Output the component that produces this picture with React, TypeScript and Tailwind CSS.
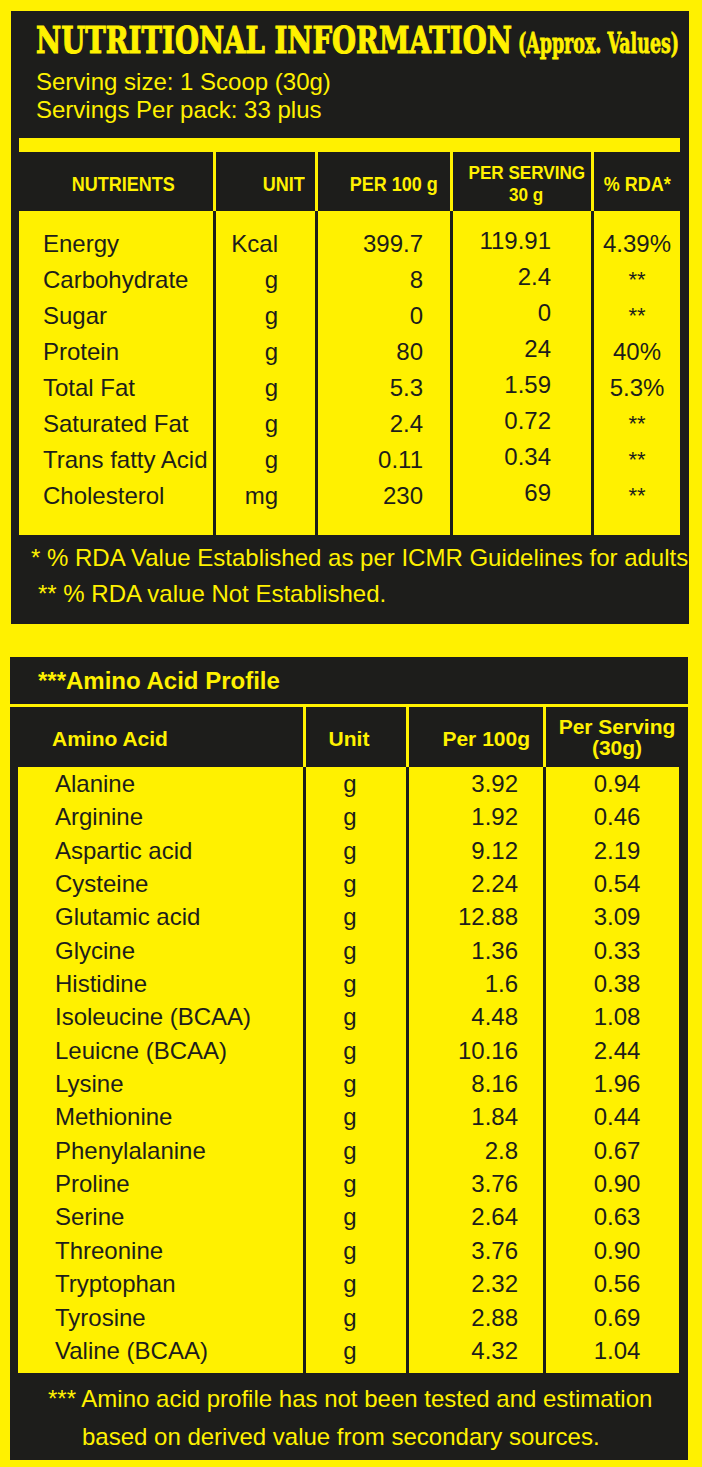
import React from "react";

const nutrients: [string, string, string, string, string][] = [
  ["Energy", "Kcal", "399.7", "119.91", "4.39%"],
  ["Carbohydrate", "g", "8", "2.4", "**"],
  ["Sugar", "g", "0", "0", "**"],
  ["Protein", "g", "80", "24", "40%"],
  ["Total Fat", "g", "5.3", "1.59", "5.3%"],
  ["Saturated Fat", "g", "2.4", "0.72", "**"],
  ["Trans fatty Acid", "g", "0.11", "0.34", "**"],
  ["Cholesterol", "mg", "230", "69", "**"],
];

const aminos: [string, string, string][] = [
  ["Alanine", "3.92", "0.94"],
  ["Arginine", "1.92", "0.46"],
  ["Aspartic acid", "9.12", "2.19"],
  ["Cysteine", "2.24", "0.54"],
  ["Glutamic acid", "12.88", "3.09"],
  ["Glycine", "1.36", "0.33"],
  ["Histidine", "1.6", "0.38"],
  ["Isoleucine (BCAA)", "4.48", "1.08"],
  ["Leuicne (BCAA)", "10.16", "2.44"],
  ["Lysine", "8.16", "1.96"],
  ["Methionine", "1.84", "0.44"],
  ["Phenylalanine", "2.8", "0.67"],
  ["Proline", "3.76", "0.90"],
  ["Serine", "2.64", "0.63"],
  ["Threonine", "3.76", "0.90"],
  ["Tryptophan", "2.32", "0.56"],
  ["Tyrosine", "2.88", "0.69"],
  ["Valine (BCAA)", "4.32", "1.04"],
];

function NutrientTable() {
  return (
    <div className="mt-[14px] ml-[8px] w-[661px]">
      <div className="h-[14px] bg-[#fff100]" />
      <div className="grid grid-cols-[194px_102px_135px_141px_89px] h-[59px] text-[#fff100] font-bold text-[20px] leading-[20px] whitespace-nowrap">
        <div className="flex items-center justify-center pl-[14px] pt-[4px]">
          <span className="inline-block scale-x-[0.9]">NUTRIENTS</span>
        </div>
        <div className="flex items-center justify-end pr-[10px] pt-[4px] border-l-[3px] border-[#fff100]">
          <span className="inline-block origin-right scale-x-[0.9]">UNIT</span>
        </div>
        <div className="flex items-center justify-end pr-[12px] pt-[4px] border-l-[3px] border-[#fff100]">
          <span className="inline-block origin-right scale-x-[0.9]">PER 100 g</span>
        </div>
        <div className="flex flex-col items-center justify-center pl-[9px] pt-[4px] text-[19px] leading-[22px] border-l-[3px] border-[#fff100]">
          <span className="inline-block scale-x-[0.9]">PER SERVING</span>
          <span className="inline-block scale-x-[0.9]">30 g</span>
        </div>
        <div className="flex items-center justify-center pt-[4px] border-l-[3px] border-[#fff100]">
          <span className="inline-block scale-x-[0.9]">% RDA*</span>
        </div>
      </div>
      <div className="grid grid-cols-[194px_102px_135px_141px_89px] h-[324px] bg-[#fff100] text-[#1d1d1b] text-[24px] leading-[36px] whitespace-nowrap">
        <div className="pt-[15px] pl-[24px]">
          {nutrients.map((r) => (
            <div key={r[0]} className="h-[36px]">{r[0]}</div>
          ))}
        </div>
        <div className="pt-[15px] pr-[37px] text-right border-l-[3px] border-[#1d1d1b]">
          {nutrients.map((r) => (
            <div key={r[0]} className="h-[36px]">{r[1]}</div>
          ))}
        </div>
        <div className="pt-[15px] pr-[27px] text-right border-l-[3px] border-[#1d1d1b]">
          {nutrients.map((r) => (
            <div key={r[0]} className="h-[36px]">{r[2]}</div>
          ))}
        </div>
        <div className="pt-[12px] pr-[40px] text-right border-l-[3px] border-[#1d1d1b]">
          {nutrients.map((r) => (
            <div key={r[0]} className="h-[36px]">{r[3]}</div>
          ))}
        </div>
        <div className="pt-[15px] text-center border-l-[3px] border-[#1d1d1b]">
          {nutrients.map((r) => (
            <div key={r[0]} className={r[4] === "**" ? "h-[36px] text-[22px]" : "h-[36px]"}>
              {r[4]}
            </div>
          ))}
        </div>
      </div>
    </div>
  );
}

function AminoTable() {
  return (
    <div className="h-[753px] bg-[#1d1d1b]">
      <div className="grid grid-cols-[293px_103px_137px_145px] h-[60px] text-[#fff100] font-bold text-[21px] leading-[21px]">
        <div className="flex items-center pl-[42px] pt-[2px]">Amino Acid</div>
        <div className="flex items-center justify-center pr-[14px] pt-[2px] border-l-[3px] border-[#fff100]">Unit</div>
        <div className="flex items-center justify-end pr-[13px] pt-[2px] border-l-[3px] border-[#fff100]">Per 100g</div>
        <div className="flex flex-col items-center justify-center border-l-[3px] border-[#fff100]">
          <span>Per Serving</span>
          <span>(30g)</span>
        </div>
      </div>
      <div className="ml-[8px] w-[661px] h-[606px] bg-[#fff100] grid grid-cols-[285px_103px_137px_136px] text-[#1d1d1b] text-[24px] leading-[33.35px] whitespace-nowrap">
        <div className="pl-[37px]">
          {aminos.map((r) => (
            <div key={r[0]} className="h-[33.35px]">{r[0]}</div>
          ))}
        </div>
        <div className="pr-[12px] text-center border-l-[3px] border-[#1d1d1b]">
          {aminos.map((r) => (
            <div key={r[0]} className="h-[33.35px]">g</div>
          ))}
        </div>
        <div className="pr-[25px] text-right border-l-[3px] border-[#1d1d1b]">
          {aminos.map((r) => (
            <div key={r[0]} className="h-[33.35px]">{r[1]}</div>
          ))}
        </div>
        <div className="pl-[9px] text-center border-l-[3px] border-[#1d1d1b]">
          {aminos.map((r) => (
            <div key={r[0]} className="h-[33.35px]">{r[2]}</div>
          ))}
        </div>
      </div>
      <div className="mt-[7px] text-[#fff100] text-[24px] leading-[38px] whitespace-nowrap">
        <div className="pl-[38px]">*** Amino acid profile has not been tested and estimation</div>
        <div className="pl-[72px]">based on derived value from secondary sources.</div>
      </div>
    </div>
  );
}

export default function App() {
  return (
    <div className="w-[702px] h-[1467px] bg-[#fff100] pt-[11px] overflow-hidden font-['Liberation_Sans',Arial,sans-serif]">
      <div className="ml-[11px] w-[678px] h-[613px] bg-[#1d1d1b]">
        <div className="pt-[10px] pl-[25px] flex items-baseline text-[#fff100] font-['DejaVu_Serif',serif] font-bold leading-none whitespace-nowrap [-webkit-text-stroke:1.2px_#fff100]">
          <div className="w-[482px] shrink-0">
            <span className="inline-block origin-left scale-x-[0.725] text-[38px]">NUTRITIONAL INFORMATION</span>
          </div>
          <div className="w-[161px] shrink-0">
            <span className="inline-block origin-left scale-x-[0.645] text-[27px] [-webkit-text-stroke:0.8px_#fff100]">(Approx. Values)</span>
          </div>
        </div>
        <div className="mt-[9px] pl-[25px] text-[#fff100] text-[24px] leading-[28px]">
          <div>Serving size: 1 Scoop (30g)</div>
          <div>Servings Per pack: 33 plus</div>
        </div>
        <NutrientTable />
        <div className="mt-[5px] text-[#fff100] text-[24px] leading-[36px] whitespace-nowrap">
          <div className="pl-[20px]">* % RDA Value Established as per ICMR Guidelines for adults.</div>
          <div className="pl-[27px]">** % RDA value Not Established.</div>
        </div>
      </div>
      <div className="mt-[33px] ml-[10px] w-[678px]">
        <div className="h-[47px] bg-[#1d1d1b] flex items-center pl-[28px] text-[#fff100] font-bold text-[24px]">
          ***Amino Acid Profile
        </div>
        <div className="mt-[3px]">
          <AminoTable />
        </div>
      </div>
    </div>
  );
}
